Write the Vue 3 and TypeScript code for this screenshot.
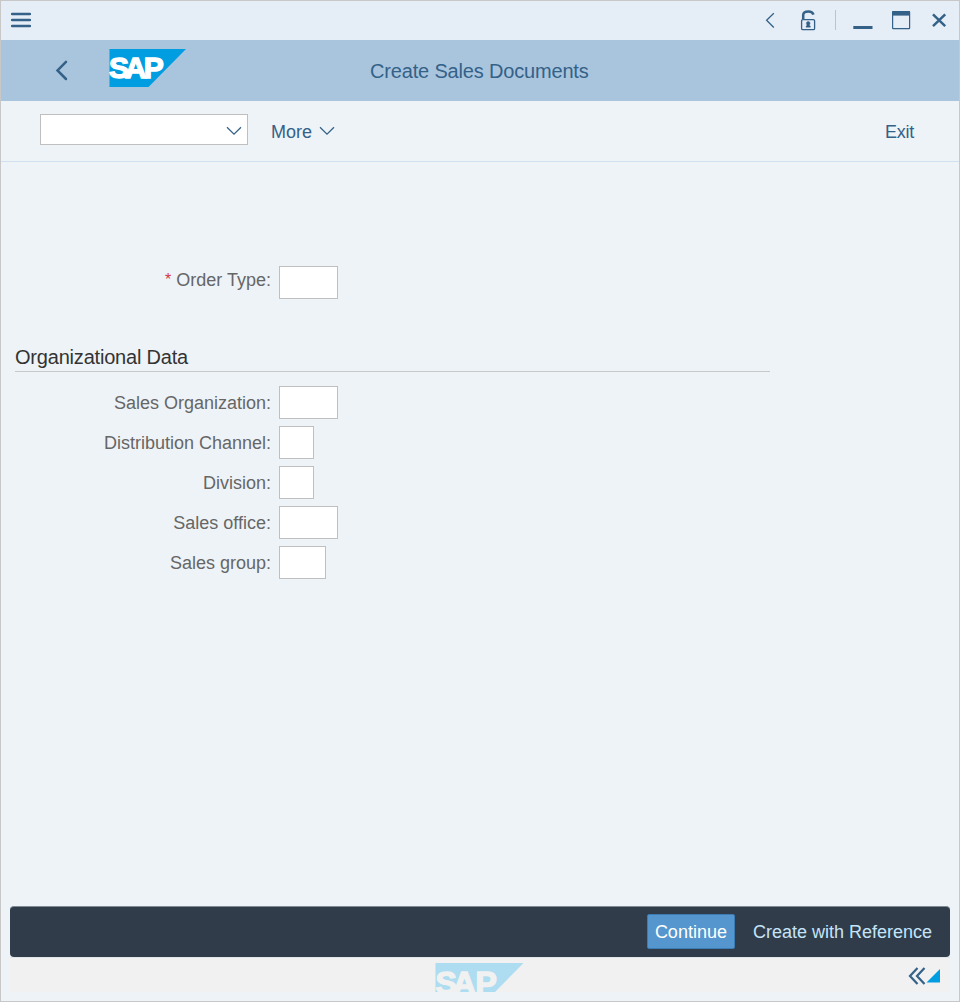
<script setup lang="ts">
interface Field {
  label: string
  size: 'two' | 'three' | 'four'
}

const organization: Field[] = [
  { label: 'Sales Organization:', size: 'four' },
  { label: 'Distribution Channel:', size: 'two' },
  { label: 'Division:', size: 'two' },
  { label: 'Sales office:', size: 'four' },
  { label: 'Sales group:', size: 'three' },
]
</script>

<template>
  <div class="window">
    <header class="titlebar">
      <svg class="menu" width="20" height="16" viewBox="0 0 20 16">
        <path d="M1 2H19M1 8H19M1 14H19" fill="none" stroke="#346187" stroke-width="2.4" stroke-linecap="round" />
      </svg>
      <div class="controls">
        <svg width="198" height="38" viewBox="0 0 198 38" fill="none" stroke="#346187">
          <path d="M12.8 12.3L5.6 19.3L12.8 26.5" stroke-width="1.3" />
          <rect x="40.6" y="18.6" width="13" height="10" rx="1.2" stroke-width="1.3" />
          <path d="M42.2 18V14Q42.2 10.4 47.4 10.4Q51.4 10.4 52.5 13.6" stroke-width="2.5" />
          <path d="M47.2 20.4A1.9 1.9 0 0 1 48.6 23.5V25H49.3V26.2H45.1V25H45.8V23.5A1.9 1.9 0 0 1 47.2 20.4Z" fill="#346187" stroke="#346187" stroke-width="0.4" />
          <path d="M74.5 9V29" stroke="#bfc3c9" stroke-width="1" />
          <path d="M92.3 26.5H111.5" stroke-width="3" />
          <rect x="131.6" y="10.6" width="17" height="17" rx="0.6" stroke-width="1.2" />
          <path d="M131.2 12.4H149" stroke-width="4.4" />
          <path d="M172 13.4L184.2 25.2M184.2 13.4L172 25.2" stroke-width="2.5" />
        </svg>
      </div>
    </header>

    <div class="shellbar">
      <svg class="back" width="14" height="22" viewBox="0 0 14 22">
        <path d="M12 2.8L3.5 11.4L12 20" fill="none" stroke="#346187" stroke-width="2.5" stroke-linecap="round" />
      </svg>
      <svg class="logo" width="77" height="38" viewBox="0 0 77 38">
        <path d="M0.5 0H77L39.5 38H0.5Z" fill="#009de0" />
        <text class="logo-text" x="0 15.7 34.7" y="29.2" fill="#fff" stroke="#fff">SAP</text>
      </svg>
      <h1>Create Sales Documents</h1>
    </div>

    <div class="toolbar">
      <div class="command">
        <svg width="16" height="10" viewBox="0 0 16 10">
          <path d="M1 1.2L8 8.2L15 1.2" fill="none" stroke="#346187" stroke-width="1.25" />
        </svg>
      </div>
      <button class="more">
        <span>More</span>
        <svg width="16" height="10" viewBox="0 0 16 10">
          <path d="M1 1.2L8 8.2L15 1.2" fill="none" stroke="#346187" stroke-width="1.25" />
        </svg>
      </button>
      <button class="exit">Exit</button>
    </div>

    <main>
      <div class="row order">
        <label><span class="required">*</span> Order Type:</label>
        <input class="four" type="text" />
      </div>
      <h2>Organizational Data</h2>
      <div class="fields">
        <div v-for="field in organization" :key="field.label" class="row">
          <label>{{ field.label }}</label>
          <input :class="field.size" type="text" />
        </div>
      </div>
    </main>

    <div class="actions">
      <button class="primary">Continue</button>
      <button class="plain">Create with Reference</button>
    </div>
    <footer>
      <svg class="footer-logo" width="89" height="29" viewBox="0 0 89 29">
        <path d="M0.5 0H88.5L60 29H0.5Z" fill="#aedcf0" />
        <text class="footer-text" x="0.4 17.8 40.6" y="30.8" fill="#f1f1f1" stroke="#f1f1f1">SAP</text>
      </svg>
      <svg class="expand" width="32" height="18" viewBox="0 0 32 18">
        <path d="M9.5 1L2 9L9.5 17M16.5 1L9 9L16.5 17" fill="none" stroke="#346187" stroke-width="2.2" />
        <path d="M32 2V15.5H18.5Z" fill="#009de0" />
      </svg>
    </footer>
  </div>
</template>

<style>
body {
  margin: 0;
}
</style>

<style scoped>
.window {
  box-sizing: border-box;
  width: 960px;
  height: 1002px;
  display: flex;
  flex-direction: column;
  border: 1px solid #c8c8c8;
  background: #eef3f8;
  font-family: "Liberation Sans", Arial, sans-serif;
  font-size: 18px;
  color: #666;
}
svg {
  display: block;
  flex: none;
}
button {
  border: 0;
  padding: 0;
  background: none;
  font: inherit;
  color: #346187;
}
.titlebar {
  display: flex;
  justify-content: space-between;
  height: 39px;
  background: #e5edf7;
}
.menu {
  margin: 11px 0 0 10px;
}
.shellbar {
  display: flex;
  height: 61px;
  background: #a9c5de;
}
.back {
  margin: 19px 0 0 53px;
}
.logo {
  margin: 9px 0 0 41px;
}
.logo-text {
  font-weight: bold;
  font-size: 30px;
  stroke-width: 1.4px;
}
h1 {
  margin: 19px 0 0 184px;
  font-size: 20px;
  line-height: 24px;
  font-weight: normal;
  letter-spacing: -0.17px;
  color: #346187;
  white-space: nowrap;
}
.toolbar {
  box-sizing: border-box;
  display: flex;
  height: 61px;
  padding: 13px 45px 0 39px;
  border-bottom: 1px solid #d1e0ee;
}
.command {
  box-sizing: border-box;
  display: flex;
  justify-content: flex-end;
  align-items: center;
  width: 208px;
  height: 31px;
  padding: 3px 5px 0 0;
  border: 1px solid #bfbfbf;
  background: #fff;
}
.more {
  display: flex;
  align-items: center;
  gap: 7px;
  height: 37px;
  margin-left: 23px;
}
.more svg {
  margin-top: -3px;
}
.exit {
  height: 37px;
  margin-left: auto;
  letter-spacing: -0.25px;
}
main {
  flex: 1;
  padding-top: 104px;
}
.row {
  display: flex;
  height: 33px;
}
label {
  width: 270px;
  margin-right: 8px;
  line-height: 35px;
  text-align: right;
  white-space: nowrap;
}
.order label {
  line-height: 28px;
}
.required {
  position: relative;
  top: -1px;
  font-size: 16px;
  color: #d43a3a;
}
input {
  box-sizing: border-box;
  height: 33px;
  padding: 0 4px;
  border: 1px solid #bfbfbf;
  border-radius: 0;
  background: #fff;
}
.two {
  width: 35px;
}
.three {
  width: 47px;
}
.four {
  width: 59px;
}
h2 {
  width: 755px;
  height: 28px;
  margin: 44px 0 14px 14px;
  border-bottom: 1px solid #c8c8c8;
  font-size: 20px;
  line-height: 28px;
  font-weight: normal;
  letter-spacing: -0.2px;
  color: #333;
}
.fields {
  display: grid;
  gap: 7px;
}
.actions {
  box-sizing: border-box;
  display: flex;
  justify-content: flex-end;
  height: 51px;
  margin: 0 9px;
  padding: 7px 18px 0 0;
  border-top: 1px solid #7e8992;
  border-radius: 4px;
  background: #303c49;
}
.primary {
  box-sizing: border-box;
  width: 88px;
  height: 35px;
  margin-right: 18px;
  padding-top: 1px;
  border: 1px solid #3c7cb4;
  border-radius: 2px;
  background: #5496cd;
  color: #fff;
}
.plain {
  height: 36px;
  color: #c5e4fb;
}
footer {
  display: flex;
  box-sizing: border-box;
  height: 35px;
  margin: 0 9px 9px;
  border-top: 1px solid #e3e6e9;
  background: #f1f1f1;
}
.footer-logo {
  margin: 5px 0 0 425px;
}
.footer-text {
  font-weight: bold;
  font-size: 32px;
  stroke-width: 1.5px;
}
.expand {
  margin: 9px 10px 0 auto;
}
</style>
